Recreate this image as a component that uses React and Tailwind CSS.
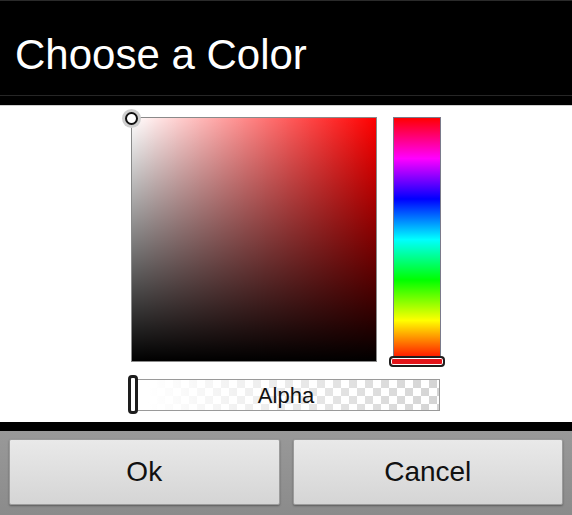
function SaturationBox() {
  return (
    <div className="relative h-[245px] w-[246px]">
      <div className="h-full w-full border border-[#8a8a8a] bg-[linear-gradient(to_top,#000,rgba(0,0,0,0)),linear-gradient(to_right,#fff,rgba(255,255,255,0)),linear-gradient(#f00,#f00)]" />
      <div className="absolute left-[-9px] top-[-8px] flex h-[19px] w-[19px] items-center justify-center rounded-full bg-[#cfcfcf]">
        <div className="h-[13px] w-[13px] rounded-full border-2 border-[#111] bg-white" />
      </div>
    </div>
  );
}

function HueBar() {
  return (
    <div className="relative h-[245px] w-[48px]">
      <div className="h-full w-full border border-[#7a7a8a] bg-[linear-gradient(to_bottom,#f00,#f0f,#00f,#0ff,#0f0,#ff0,#f00)]" />
      <div className="absolute bottom-[-5px] left-[-4px] h-[11px] w-[56px] rounded-[4px] border-2 border-[#1e1e1e] bg-[#e3141a] shadow-[inset_0_0_0_1px_#fff]" />
    </div>
  );
}

function AlphaBar() {
  return (
    <div className="relative h-[32px] w-[308px]">
      <div className="h-full w-full border border-[#9a9a9a] bg-[repeating-conic-gradient(#d2d2d2_0_25%,#fff_0_50%)] bg-size-[16px_16px]">
        <div className="flex h-full w-full items-center justify-center bg-[linear-gradient(to_right,#fff_5%,rgba(255,255,255,0.05))] text-[22px] text-[#111]">
          Alpha
        </div>
      </div>
      <div className="absolute left-[-4px] top-[-4px] h-[39px] w-[10px] rounded-[4px] border-[3px] border-[#1e1e1e] bg-white" />
    </div>
  );
}

function Button({ children }) {
  return (
    <button className="flex h-[66px] flex-1 items-center justify-center rounded-[2px] border border-[#9b9b9b] bg-[linear-gradient(#e9e9e9,#d5d5d5)] text-[28px] text-[#111] shadow-[0_1px_2px_rgba(0,0,0,0.35)]">
      {children}
    </button>
  );
}

export default function App() {
  return (
    <div className="flex h-[515px] w-[572px] flex-col overflow-hidden bg-white font-['Liberation_Sans',Arial,sans-serif]">
      <header className="h-[105px] border-t border-[#2a2a2a] bg-black">
        <div className="flex h-[95px] items-center border-b border-[#262626] pl-[15px] pt-[14px]">
          <h1 className="text-[42px] leading-none text-white">Choose a Color</h1>
        </div>
      </header>

      <div className="h-px bg-[#cfcfcf]" />

      <main className="flex h-[316px] flex-col items-center pt-[11px]">
        <div className="flex gap-[16px]">
          <SaturationBox />
          <HueBar />
        </div>
        <div className="mt-[17px]">
          <AlphaBar />
        </div>
      </main>

      <footer className="flex flex-1 flex-col">
        <div className="h-[9px] bg-black" />
        <div className="flex flex-1 gap-[13px] bg-[linear-gradient(#999,#8b8b8b)] px-[9px] pb-[10px] pt-[8px]">
          <Button>Ok</Button>
          <Button>Cancel</Button>
        </div>
      </footer>
    </div>
  );
}
